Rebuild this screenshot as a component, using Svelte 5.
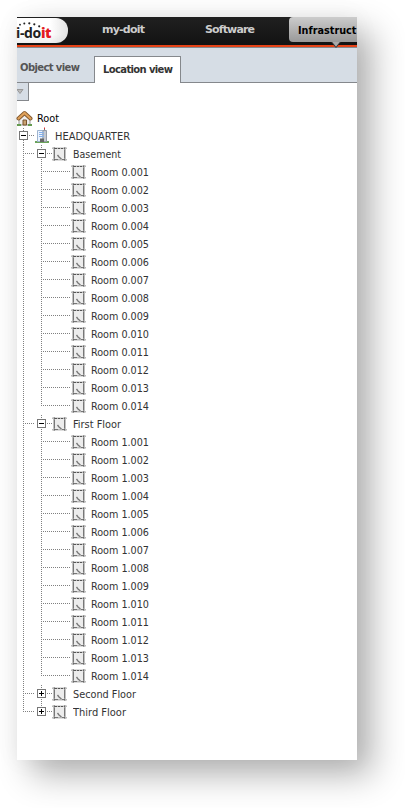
<script>
  const rooms = (floor) =>
    Array.from({ length: 14 }, (_, i) => ({
      label: `Room ${floor}.${String(i + 1).padStart(3, '0')}`,
      kind: 'room',
      last: i === 13
    }));

  const rows = [
    { label: 'Root', kind: 'root' },
    { label: 'HEADQUARTER', kind: 'site' },
    { label: 'Basement', kind: 'floor', open: true },
    ...rooms(0),
    { label: 'First Floor', kind: 'floor', open: true },
    ...rooms(1),
    { label: 'Second Floor', kind: 'floor', open: false },
    { label: 'Third Floor', kind: 'floor', open: false, last: true }
  ];
  const gutter = { root: 18, site: 36, floor: 54, room: 72 };
  const textWidth = { 'Root': 22, 'HEADQUARTER': 75, 'Basement': 48, 'First Floor': 48, 'Second Floor': 63, 'Third Floor': 53 };
</script>

{#snippet dots(d)}
  <path {d} fill="none" stroke="#808080" stroke-dasharray="1 1" />
{/snippet}

{#snippet toggle(x, open)}
  <g transform="translate({x} 4)">
    <rect x=".5" y=".5" width="8" height="8" fill="#fff" stroke="#777" />
    <path d={open ? 'M2 4.5H7' : 'M2 4.5H7M4.5 2V7'} stroke="#000" fill="none" />
  </g>
{/snippet}

{#snippet roomIcon(x)}
  <g transform="translate({x} 2)">
    <rect x="1" y="0" width="13" height="14" fill="#ddd" />
    <rect x="3" y="2" width="9" height="10" fill="#ececec" />
    <path d="M2.3 0V14M12.7 0V14" fill="none" stroke="#999" stroke-width="1.4" />
    <path d="M2.5 3V11M12.5 3V11" fill="none" stroke="#777" />
    <path d="M0 1.5H15M0 12.5H15" fill="none" stroke="#bbb" />
    <path d="M3 1.5H12" fill="none" stroke="#555" stroke-dasharray="2 1" />
    <path d="M3 12.5H6M10 12.5H12" fill="none" stroke="#777" />
    <path d="M5.5 8L7 10L9.5 12" fill="none" stroke="#777" stroke-width="1.3" />
    <path d="M2 1h1v1H2zM12 1h1v1h-1zM2 12h1v1H2zM12 12h1v1h-1z" fill="#666" />
    <path d="M0 0h1v1H0zM14 0h1v1h-1zM0 13h1v1H0zM14 13h1v1h-1z" fill="#ddd" />
  </g>
{/snippet}

<div class="page">
  <div class="window">
    <header>
      <div class="logo">
        <svg class="arc" width="30" height="8" viewBox="0 0 30 8">
          <g fill="#222">
            <circle cx="3" cy="3.7" r=".9" /><circle cx="7.3" cy="2.4" r="1" />
            <circle cx="12.3" cy="2.3" r="1.1" /><circle cx="17.3" cy="3.3" r="1.1" />
            <circle cx="22.2" cy="5.3" r="1.1" />
          </g>
        </svg>
        <span>i-do<b>it</b></span>
      </div>
      <svg class="nav first" width="44" height="16"><text x="0" y="12" textLength="43">my-doit</text></svg>
      <svg class="nav second" width="51" height="16"><text x="0" y="12" textLength="50">Software</text></svg>
      <div class="active"><svg width="68" height="18"><text x="9" y="13" textLength="58.5" lengthAdjust="spacingAndGlyphs">Infrastruct</text></svg></div>
      <svg class="pointer" width="10" height="7" viewBox="0 0 10 7"><path d="M0 0H10L5 6Z" fill="#333" /><path d="M1.2 0H8.8L5 4.7Z" fill="#aaa" /></svg>
    </header>
    <div class="tabs">
      <div class="tab"><svg width="64" height="16"><text x="3" y="12" textLength="60">Object view</text></svg></div>
      <div class="tab current"><svg width="74" height="16"><text x="0" y="12" textLength="70">Location view</text></svg></div>
    </div>
    <div class="drop"><svg width="8" height="6" viewBox="0 0 8 6"><path d="M0 .5H6L3 4.5Z" fill="#bbb" stroke="#999" /></svg></div>
    <div class="tree">
      {#each rows as row}
        <div class="row">
          <svg class="guides" width={gutter[row.kind]} height="18">
            {#if row.kind === 'root'}
              <path d="M4 9L9.5 5L15 9V16H4Z" fill="#eee" stroke="#999" />
              <path d="M8 16V11H11.5V16Z" fill="#c9a274" stroke="#79552f" />
              <path d="M3.5 9.5L9.5 4L15.5 9.5" fill="none" stroke="#82592f" stroke-width="4" stroke-linejoin="round" stroke-linecap="round" />
              <path d="M3.5 9.5L9.5 4L15.5 9.5" fill="none" stroke="#dfa15a" stroke-width="2.2" stroke-linecap="round" />
              <path d="M2 16H6M13 16H17" stroke="#649b4f" stroke-width="2" />
            {:else if row.kind === 'site'}
              {@render dots('M8.5 1V18')}
              {@render dots('M14 8.5H19')}
              {@render toggle(4, true)}
              <path d="M20 15H34" stroke="#6ba35b" stroke-width="2" />
              <path d="M22.5 14.5V3.5H28V14.5Z" fill="#eaf3ff" stroke="#9fb4cf" />
              <path d="M28 3.5H31.5V14.5H28Z" fill="#c5c9d0" stroke="#959ba6" />
              <path d="M24 5.5H29M24 7.5H29M24 9.5H29" stroke="#86b0e8" />
              <path d="M25 15V11.5H29V15Z" fill="#666" />
              <path d="M29.5 2V3" stroke="#777" /><path d="M29.5 .5V2" stroke="#d33" />
            {:else if row.kind === 'floor'}
              {@render dots(row.last ? 'M8.5 0V9' : 'M8.5 0V18')}
              {@render dots('M10 8.5H19')}
              {@render dots(row.last ? 'M26.5 0V4' : 'M26.5 0V18')}
              {@render dots('M32 8.5H37')}
              {@render toggle(22, row.open)}
              {@render roomIcon(37)}
            {:else}
              {@render dots('M8.5 0V18')}
              {@render dots(row.last ? 'M26.5 0V9' : 'M26.5 0V18')}
              {@render dots('M28 8.5H55')}
              {@render roomIcon(56)}
            {/if}
          </svg>
          <svg class="label" class:root={row.kind === 'root'} width="90" height="18"><text x="0" y="13" textLength={textWidth[row.label] ?? 58} lengthAdjust="spacingAndGlyphs">{row.label}</text></svg>
        </div>
      {/each}
    </div>
  </div>
</div>

<style>
  :global(body) { background: #fff; }
  .page {
    box-sizing: border-box;
    width: 405px;
    height: 808px;
    padding: 17px 0 0 17px;
    overflow: hidden;
    background: #fff;
  }
  .window {
    width: 340px;
    height: 743px;
    background: #fff;
    box-shadow: 15px 15px 32px rgba(0, 0, 0, .3), 0 0 24px rgba(0, 0, 0, .05);
    font-family: "DejaVu Sans Condensed", "DejaVu Sans", sans-serif;
    font-size: 11px;
  }
  svg { display: block; }
  header {
    position: relative;
    height: 31px;
    box-sizing: border-box;
    background: linear-gradient(#202020, #111);
    border-bottom: 1px solid #858b91;
    font-family: "DejaVu Sans", sans-serif;
    font-weight: bold;
    padding-top: 1px;
  }
  header::after {
    content: "";
    position: absolute;
    inset: auto 0 0;
    height: 2px;
    background: #e64317;
  }
  .logo {
    width: 51px;
    height: 25px;
    border-radius: 0 12px 12px 0;
    background: linear-gradient(90deg, #fff0 65%, #ccc8), linear-gradient(#fff 65%, #eee);
    color: #222;
  }
  .logo span {
    position: absolute;
    left: -1px;
    top: 6px;
    font: bold 14px/19px "Open Sans", sans-serif;
    letter-spacing: -.35px;
  }
  .logo b { color: #e41b23; }
  .arc { position: absolute; left: 0; top: 4px; }
  .nav { position: absolute; top: 4px; }
  .first { left: 85px; }
  .second { left: 188px; }
  .nav text { fill: #ccc; }
  .active {
    position: absolute;
    left: 272px;
    top: 0;
    width: 68px;
    height: 25px;
    border-radius: 4px 0 0 4px;
    background: linear-gradient(#ccc, #999);
  }
  .active svg { margin-top: 4px; }
  .pointer { position: absolute; left: 314px; top: 25px; z-index: 1; }
  .tabs {
    display: flex;
    height: 35px;
    box-sizing: border-box;
    background: #d6dde5;
    border-bottom: 1px solid #85888c;
    font-family: "DejaVu Sans", sans-serif;
    font-weight: bold;
    font-size: 10px;
  }
  .tab { width: 77px; padding-top: 11px; box-sizing: border-box; }
  .tab text { fill: #555; }
  .current {
    width: 87px;
    height: 27px;
    margin-top: 8px;
    padding: 4px 0 0 8px;
    background: #fff;
    border: 1px solid #85888c;
    border-bottom: 0;
  }
  .current text { fill: #333; }
  .drop {
    width: 12px;
    height: 18px;
    box-sizing: border-box;
    padding-top: 6px;
    background: #d6dde5;
    border: solid #85888c;
    border-width: 0 1px 1px 0;
  }
  .tree { padding-top: 8px; margin-left: -2px; }
  .row { display: flex; height: 18px; gap: 4px; }
  .label text { fill: #333; }
  .root text { fill: #000; }
</style>
